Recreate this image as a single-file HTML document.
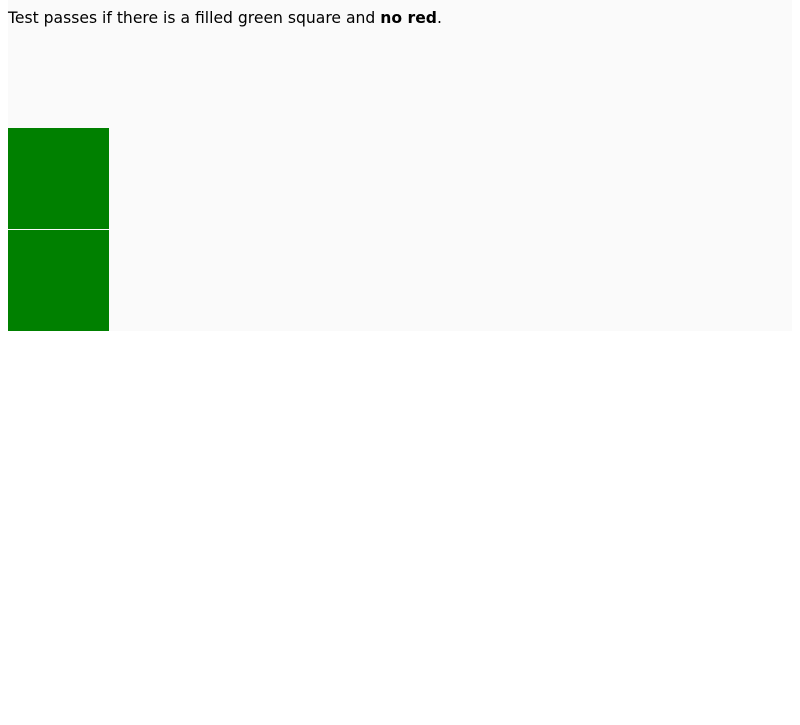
<!DOCTYPE html>
<html><head><style>
html,body{margin:0;padding:0;background:#fff;}
#wrap{position:absolute;left:8px;top:0;width:784px;height:331px;background:#fafafa;}
p{margin:0;position:absolute;left:0;top:8px;font-family:"DejaVu Sans","Liberation Sans",sans-serif;font-size:15.6px;line-height:20px;color:#000;white-space:nowrap;}
.g{position:absolute;left:0;width:101px;background:#008000;}
</style></head><body>
<div id="wrap">
<p>Test passes if there is a filled green square and <b>no red</b>.</p>
<div class="g" style="top:128px;height:101px"></div>
<div class="g" style="top:230px;height:101px"></div>
</div>
</body></html>
